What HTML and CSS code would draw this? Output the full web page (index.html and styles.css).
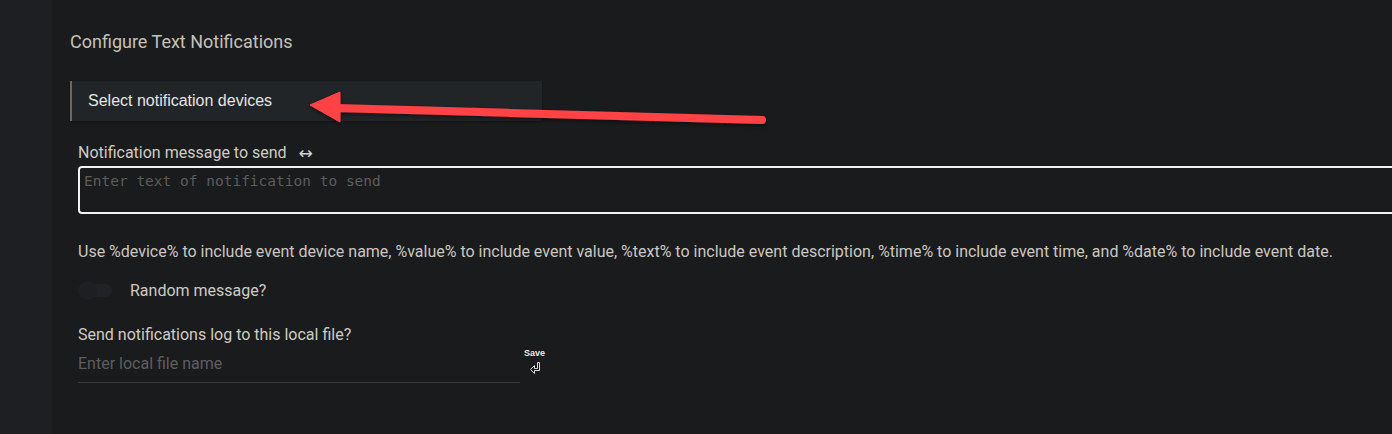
FILE: index.html
```html
<!DOCTYPE html>
<html lang="en">
<head>
    <meta charset="UTF-8">
    <meta name="viewport" content="width=device-width, initial-scale=1.0">
    <title>Configure Text Notifications</title>
    <link rel="stylesheet" href="styles.css">
</head>
<body>

<div class="page">
    <!-- Sidebar -->
    <aside class="sidebar"></aside>

    <!-- Main -->
    <main class="main">
        <h2 class="title">Configure Text Notifications</h2>

        <div class="devices">Select notification devices</div>

        <div class="form">
            <label class="label" for="message">Notification message to send <span class="swap">&#8596;</span></label>
            <textarea id="message" class="message" placeholder="Enter text of notification to send"></textarea>

            <p class="help">Use %device% to include event device name, %value% to include event value, %text% to include event description, %time% to include event time, and %date% to include event date.</p>

            <div class="toggle-row">
                <span class="toggle"><span class="knob"></span></span>
                <span class="toggle-label">Random message?</span>
            </div>

            <label class="label" for="logfile">Send notifications log to this local file?</label>
            <div class="file-row">
                <input id="logfile" class="file" type="text" placeholder="Enter local file name">
                <div class="save">
                    <span>Save</span>
                    <svg width="12" height="14" viewBox="0 0 12 14">
                        <path d="M10.5 1.5 V9.5 H5.5 V12.5 L1.5 8.5 L5.5 4.5 V7.5 H8.5 V1.5 Z" fill="none" stroke="#d8d8d8" stroke-width="1"/>
                    </svg>
                </div>
            </div>
        </div>
    </main>
</div>

<!-- Annotation arrow -->
<svg class="annotation" width="1392" height="434" viewBox="0 0 1392 434">
    <defs>
        <filter id="shadow" x="-10%" y="-50%" width="120%" height="200%">
            <feDropShadow dx="0" dy="2" stdDeviation="2" flood-color="#000" flood-opacity="0.5"/>
        </filter>
    </defs>
    <g filter="url(#shadow)" fill="#fe4345" stroke="#fe4345">
        <line x1="336" y1="108" x2="762" y2="120" stroke-width="8" stroke-linecap="round"/>
        <polygon points="310,105 340,92 340,122" stroke-width="1" stroke-linejoin="round"/>
    </g>
</svg>

</body>
</html>
```

FILE: styles.css
```css
html, body {
    margin: 0;
    height: 100%;
    overflow: hidden;
}

body {
    background-color: #1a1b1d;
    color: #c9c6c0;
    font-family: Roboto, "Liberation Sans", Arial, sans-serif;
}

.page {
    display: flex;
    height: 100%;
}

/* Sidebar */
.sidebar {
    width: 52px;
    flex-shrink: 0;
    background-color: #1e1f22;
}

/* Main */
.main {
    flex: 1;
    padding: 30px 0 0 18px;
    min-width: 0;
}

.title {
    margin: 0;
    font-size: 18px;
    font-weight: 400;
    line-height: 24px;
    color: #c5c1ba;
}

.devices {
    margin-top: 27px;
    width: 454px;
    height: 40px;
    line-height: 40px;
    padding-left: 16px;
    background-color: #222528;
    border-left: 2px solid #6f655c;
    font-family: "Liberation Sans", Arial, sans-serif;
    font-size: 16px;
    color: #e4e4e4;
    box-shadow: 0 1px 2px rgba(0, 0, 0, 0.3);
}

.form {
    padding-left: 8px;
}

.label {
    display: block;
    font-size: 16px;
    line-height: 20px;
    color: #cfcbc4;
}

.form > .label:first-child {
    margin-top: 22px;
}

.swap {
    margin-left: 8px;
    font-family: "DejaVu Sans", sans-serif;
    font-size: 17px;
    line-height: 20px;
    vertical-align: top;
    color: #d0d0d0;
}

.message {
    display: block;
    box-sizing: border-box;
    width: 1340px;
    height: 48px;
    margin-top: 3px;
    padding: 5px 4px 4px 4px;
    background-color: #1a1b1d;
    border: 2px solid #f2f2f2;
    border-radius: 4px;
    resize: none;
    font-family: "DejaVu Sans Mono", "Liberation Mono", monospace;
    font-size: 14.5px;
    line-height: 17px;
    color: #ddd;
    outline: none;
}

.message::placeholder {
    color: #5c5c5c;
}

.help {
    margin: 28px 0 0 0;
    font-size: 16px;
    line-height: 20px;
    color: #cbc7c0;
}

.toggle-row {
    display: flex;
    align-items: center;
    margin-top: 18px;
    height: 20px;
}

.toggle {
    position: relative;
    width: 34px;
    height: 13px;
    border-radius: 7px;
    background-color: #212225;
}

.knob {
    position: absolute;
    left: 0;
    top: -3px;
    width: 19px;
    height: 19px;
    border-radius: 50%;
    background-color: #1e1f22;
}

.toggle-label {
    margin-left: 18px;
    font-size: 16px;
    color: #cfcbc4;
}

.toggle-row + .label {
    margin-top: 25px;
}

.file-row {
    display: flex;
    align-items: flex-start;
    margin-top: -1px;
}

.file {
    box-sizing: border-box;
    width: 442px;
    height: 39px;
    margin-top: 0;
    padding: 0;
    background: transparent;
    border: none;
    border-bottom: 1px solid #3a3b3d;
    font-family: Roboto, "Liberation Sans", Arial, sans-serif;
    font-size: 16px;
    color: #ddd;
    outline: none;
}

.file::placeholder {
    color: #5e5e5e;
}

.save {
    display: flex;
    flex-direction: column;
    align-items: center;
    margin-left: 4px;
    margin-top: 4px;
    font-size: 9px;
    font-weight: 700;
    color: #e8e8e8;
    font-family: "Liberation Sans", Arial, sans-serif;
}

.save svg {
    margin-top: 3px;
}

/* Annotation */
.annotation {
    position: absolute;
    left: 0;
    top: 0;
    pointer-events: none;
}
```
